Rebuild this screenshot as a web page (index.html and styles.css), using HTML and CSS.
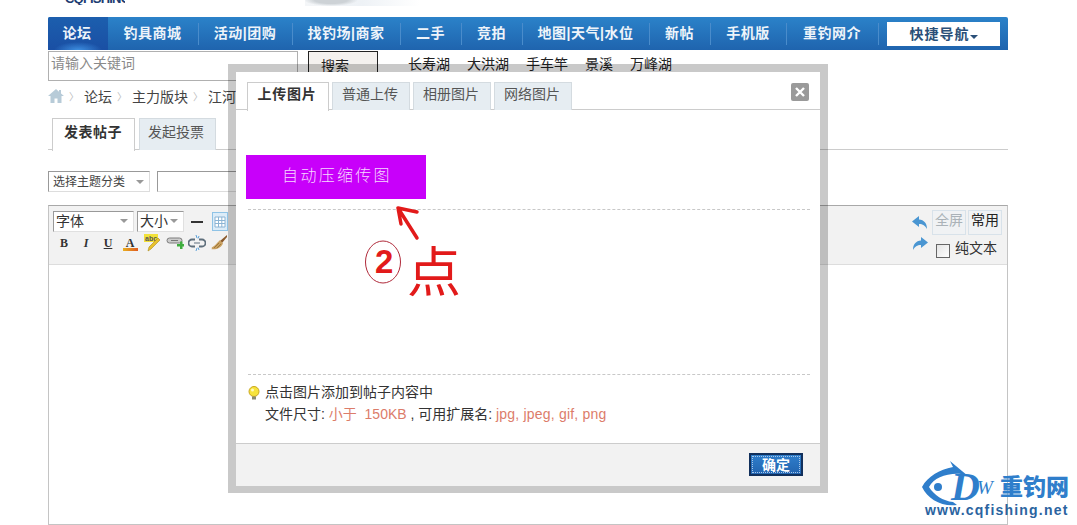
FILE: index.html
```html
<!DOCTYPE html>
<html lang="zh-CN">
<head>
<meta charset="utf-8">
<title>发表帖子</title>
<link rel="stylesheet" href="styles.css">
</head>
<body>
<div class="page">
  <header class="topbar">
    <div class="logo-clip"><span>CQFISHING</span></div>
    <div class="banner-clip"></div>
  </header>
  <nav class="nav">
    <a class="nav-item active">论坛</a>
    <a class="nav-item">钓具商城</a>
    <a class="nav-item">活动|团购</a>
    <a class="nav-item">找钓场|商家</a>
    <a class="nav-item">二手</a>
    <a class="nav-item">竞拍</a>
    <a class="nav-item">地图|天气|水位</a>
    <a class="nav-item">新帖</a>
    <a class="nav-item">手机版</a>
    <a class="nav-item">重钓网介</a>
    <a class="nav-quick">快捷导航<i class="caret"></i></a>
  </nav>
  <div class="search-row">
    <div class="search-input">请输入关键词</div>
    <div class="search-btn">搜索</div>
    <div class="hot-links"><a>长寿湖</a><a>大洪湖</a><a>手车竿</a><a>景溪</a><a>万峰湖</a></div>
  </div>
  <div class="crumbs">
    <svg class="home" viewBox="0 0 16 14" width="16" height="14"><path d="M8 0 0 7h2.500v7h4V9.500h3V14h4V7H16L13 4.400V1h-2v1.700z" fill="#b7cbd8"/></svg>
    <span class="sep">〉</span><span>论坛</span><span class="sep">〉</span><span>主力版块</span><span class="sep">〉</span><span>江河</span>
  </div>
  <div class="post-tabs">
    <div class="post-tab on">发表帖子</div>
    <div class="post-tab">发起投票</div>
  </div>
  <div class="form-row">
    <div class="type-select">选择主题分类<i class="mini-caret"></i></div>
    <div class="title-input"></div>
  </div>
  <section class="editor">
    <div class="toolbar">
      <div class="tool-left">
        <div class="tool-row">
          <div class="ed-select font">字体<i class="mini-caret"></i></div>
          <div class="ed-select size">大小<i class="mini-caret"></i></div>
          <i class="dash"></i>
          <svg class="table-ico" viewBox="0 0 16 19" width="16" height="19"><rect x=".5" y=".5" width="15" height="18" fill="#dcecf8" stroke="#8fc3e6"/><path d="M3 5h10v10H3z" fill="#fff" stroke="#8cb4d4"/><path d="M3 8.500h10M3 11.500h10M6.500 5v10M9.800 5v10" stroke="#8cb4d4"/></svg>
        </div>
        <div class="tool-row icons">
          <span class="ti b">B</span>
          <span class="ti it">I</span>
          <span class="ti u">U</span>
          <span class="ti color">A</span>
          <span class="ti"><svg viewBox="0 0 18 18" width="18" height="18"><rect x="0" y="0" width="14" height="8" fill="#f2e23a"/><text class="abc" x="1" y="7">abc</text><path d="M16 6 7 15l-3 2 1-4 9-9z" fill="#e8c22c" stroke="#a98a1c" stroke-width=".6"/></svg></span>
          <span class="ti"><svg viewBox="0 0 18 16" width="18" height="16"><rect x="1" y="3" width="15" height="5" rx="2.500" fill="#ccc" stroke="#7d7d7d"/><path d="M5 5.500h7" stroke="#777"/><path d="M11 9h3V6.500h2.500V9H19v2.500h-2.500V14H14v-2.500h-3z" fill="#3fae3f"/></svg></span>
          <span class="ti"><svg viewBox="0 0 18 16" width="18" height="16" fill="none"><path d="M7 4.500H4a3.500 3.500 0 0 0 0 7h3M11 4.500h3a3.500 3.500 0 0 1 0 7h-3" stroke="#5f6f7c" stroke-width="1.800"/><path d="M6 8h6" stroke="#5f6f7c"/><path d="M8 0l1 3M11 1 10 3.500M8 16l1-3M11 15l-1-2.500" stroke="#5aa0d8"/></svg></span>
          <span class="ti"><svg viewBox="0 0 18 16" width="18" height="16"><path d="M17 0 10 6l2 2 5-6z" fill="#8a5a2c"/><path d="M10 5 13 8.500C11 13 6 15 1 14c2-.8 1-1.500 0-1.500C4 12 7 8 10 5z" fill="#c9a060"/><path d="M4 13 9 8M7 13 11 9" stroke="#8a6a30" stroke-width=".7"/></svg></span>
        </div>
      </div>
      <div class="tool-right">
        <div class="tool-row">
          <svg class="arrow-ico" viewBox="0 0 16 13" width="16" height="13"><path d="M7 0 0 5.500 7 11V8c4 0 6 1.500 8 5 0-6-3-9-8-9.500z" fill="#4a96d2"/></svg>
          <span class="ed-btn dim">全屏</span>
          <span class="ed-btn">常用</span>
        </div>
        <div class="tool-row">
          <svg class="arrow-ico up" viewBox="0 0 16 13" width="16" height="13"><path d="M9 0l7 5.500L9 11V8C5 8 3 9.500 1 13c0-6 3-9 8-9.500z" fill="#4a96d2"/></svg>
          <i class="check"></i>
          <span class="plain">纯文本</span>
        </div>
      </div>
    </div>
    <div class="ed-body"></div>
  </section>
</div>

<aside class="dialog">
  <div class="dlg-head">
    <div class="dlg-tabs">
      <div class="dlg-tab on">上传图片</div>
      <div class="dlg-tab">普通上传</div>
      <div class="dlg-tab">相册图片</div>
      <div class="dlg-tab">网络图片</div>
    </div>
    <div class="dlg-close"><svg viewBox="0 0 10 10" width="10" height="10"><path d="M1 1l8 8M9 1l-8 8" stroke="#fff" stroke-width="2.400"/></svg></div>
  </div>
  <div class="upload-btn">自动压缩传图</div>
  <div class="dash-line first"></div>
  <div class="dash-line second"></div>
  <div class="tips">
    <svg class="bulb" viewBox="0 0 12 14" width="12" height="14"><circle cx="6" cy="5.500" r="5" fill="#f6e33c" stroke="#c9a61e"/><circle cx="4.500" cy="4" r="1.500" fill="#fff8c0"/><rect x="4" y="10.500" width="4" height="3" fill="#8a8a70"/></svg>
    <p>点击图片添加到帖子内容中</p>
    <p>文件尺寸: <em>小于 &nbsp;150KB</em> , 可用扩展名: <em class="ext">jpg, jpeg, gif, png</em></p>
  </div>
  <div class="dlg-foot"><button class="ok-btn"><span>确定</span></button></div>
</aside>

<svg class="annot" viewBox="0 0 115 110" width="115" height="110">
  <path d="M43 8 62 38M43 8 62 12M43 8 46 24" fill="none" stroke="#e21a1a" stroke-width="3.500" stroke-linecap="round"/>
  <ellipse cx="28" cy="62" rx="17.500" ry="21" fill="none" stroke="#b02a3a"/>
  <text class="annot-two" x="20" y="73">2</text>
  <text class="annot-dot" x="52" y="92">点</text>
</svg>

<div class="watermark">
  <svg class="fish" viewBox="0 0 80 48" width="80" height="48">
    <path d="M1 26C7 15 18 9 32 6L29 0 47 15 40 13C25 12 13 17 8 26 13 34 22 40 32 41L36 44C20 46 7 38 1 26z" fill="#2f7ecb"/>
    <circle cx="17" cy="26" r="4" fill="#2f7ecb"/>
    <text class="fish-d" x="30" y="39">D</text>
    <text class="fish-w" x="56" y="33">W</text>
  </svg>
  <div class="wm-name">重钓网</div>
  <div class="wm-url">www.cqfishing.net</div>
</div>
</body>
</html>
```
FILE: styles.css
```css
html, body {
  margin: 0;
  height: 525px;
  overflow: hidden;
  background: #fff;
  font-family: "Liberation Sans", "Noto Sans CJK SC", sans-serif;
  font-size: 14px;
  color: #333;
}
.page {
  width: 960px;
  margin-left: 48px;
  height: 525px;
  display: flex;
  flex-direction: column;
}
.topbar {
  height: 17px;
  flex: none;
  display: flex;
  align-items: flex-start;
}
.logo-clip {
  margin-left: 17px;
  width: 60px;
  height: 5px;
  overflow: hidden;
  display: flex;
  align-items: flex-end;
}
.logo-clip span {
  font: bold 13px/13px "Liberation Sans", sans-serif;
  color: #1d3d72;
  letter-spacing: -.8px;
  white-space: nowrap;
}
.banner-clip {
  margin-left: 180px;
  width: 115px;
  height: 6px;
  background: radial-gradient(ellipse 27px 6px at 26px 0, #cdd2d6 60%, transparent 100%), linear-gradient(90deg, #f4f6f8, #eef2f6 50%, #fff 100%);
}
.nav {
  height: 33px;
  flex: none;
  display: grid;
  grid-template-columns: 60px 91px 94px 108px 61px 61px 127px 61px 76px 92px 121px 8px;
  align-items: stretch;
  background: linear-gradient(#2b82c9, #1f64ae);
  border-radius: 2px 2px 0 0;
}
.nav-item {
  display: flex;
  align-items: center;
  justify-content: center;
  box-sizing: border-box;
  padding: 0 2px 4px 0;
  color: #eef4fa;
  font-weight: 700;
  font-size: 14px;
  letter-spacing: .5px;
  background: linear-gradient(#4a8ccb, #4a8ccb) no-repeat right center / 1px 22px;
}
.nav-item.active {
  background: radial-gradient(ellipse 24px 8px at 50% 100%, #3d8ee0, transparent), linear-gradient(#1c5fae, #1a4fa4);
  border-radius: 2px 0 0 0;
}
.nav-quick {
  grid-column: 11;
  margin: 5px 0 4px 8px;
  padding-bottom: 2px;
  background: #fff;
  color: #2a4f78;
  font-weight: 700;
  font-size: 14px;
  letter-spacing: 1px;
  display: flex;
  align-items: center;
  justify-content: center;
}
.caret {
  width: 0;
  height: 0;
  border: 4px solid transparent;
  border-top-color: #2a4f78;
  border-bottom: 0;
  margin-top: 7px;
}
.search-row {
  margin-top: 1px;
  height: 30px;
  flex: none;
  display: flex;
}
.search-input {
  width: 246px;
  height: 28px;
  border: 1px solid #b0b0b0;
  color: #8a8a8a;
  padding-left: 2px;
  line-height: 23px;
}
.search-btn {
  margin-left: 10px;
  width: 68px;
  height: 34px;
  border: 1px solid #222;
  background: #f4f1ee;
  color: #222;
  text-align: center;
  line-height: 28px;
  text-indent: -16px;
}
.hot-links {
  margin-left: 30px;
  display: flex;
  gap: 17px;
  color: #222;
  line-height: 26px;
}
.crumbs {
  margin-top: 4px;
  height: 22px;
  flex: none;
  display: flex;
  align-items: center;
  color: #444;
}
.sep {
  width: 20px;
  color: #bbb;
  font-size: 10px;
  text-align: center;
}
.post-tabs {
  margin-top: 11px;
  height: 31px;
  flex: none;
  display: flex;
  gap: 4px;
  padding-left: 4px;
  border-bottom: 1px solid #ccc;
}
.post-tab {
  width: 75px;
  height: 31px;
  background: #e6edf2;
  border: 1px solid #d4dbe0;
  border-bottom: 0;
  text-align: center;
  line-height: 26px;
  text-indent: -3px;
  color: #555;
}
.post-tab.on {
  width: 81px;
  height: 32px;
  background: #fff;
  border-color: #ccc;
  font-weight: 700;
  color: #333;
  letter-spacing: .5px;
  text-indent: -1px;
}
.form-row {
  margin-top: 21px;
  height: 21px;
  flex: none;
  display: flex;
  gap: 7px;
}
.type-select {
  width: 96px;
  padding: 0 0 2px 4px;
  height: 17px;
  border: 1px solid #aaa;
  border-color: #999 #ddd #ddd #999;
  font-size: 12px;
  color: #444;
  display: flex;
  align-items: center;
  gap: 11px;
}
.mini-caret {
  width: 0;
  height: 0;
  border: 4px solid transparent;
  border-top: 4px solid #999;
  border-bottom: 0;
  flex: none;
  margin-top: 2px;
}
.title-input {
  width: 300px;
  height: 19px;
  border: 1px solid #aaa;
  border-color: #999 #ddd #ddd #999;
}
.editor {
  margin-top: 13px;
  flex: 1;
  display: flex;
  flex-direction: column;
  border: 1px solid #c4c4c4;
  border-top-color: #a8a8a8;
}
.toolbar {
  height: 59px;
  flex: none;
  background: #f2f2f2;
  border-bottom: 1px solid #ddd;
  display: flex;
  justify-content: space-between;
  padding: 4px 5px 0 4px;
  box-sizing: border-box;
}
.tool-row {
  display: flex;
  align-items: center;
  height: 23px;
}
.ed-select {
  height: 21px;
  box-sizing: border-box;
  background: #fff;
  border: 1px solid #999;
  border-color: #999 #e0e0e0 #e0e0e0 #999;
  color: #333;
  padding: 0 5px 3px 2px;
  display: flex;
  align-items: center;
  justify-content: space-between;
}
.ed-select.font { width: 81px; }
.ed-select.size { width: 47px; margin-left: 3px; }
.dash {
  width: 12px;
  height: 2px;
  background: #333;
  margin-left: 7px;
}
.table-ico {
  margin-left: 9px;
}
.tool-row.icons {
  margin-top: -1px;
  height: 22px;
}
.ti {
  width: 22px;
  height: 22px;
  display: flex;
  align-items: center;
  justify-content: center;
  font: bold 12px "Liberation Serif", serif;
  color: #333;
}
.ti svg { margin-left: 2px; }
.ti.it { font-style: italic; }
.ti.u { text-decoration: underline; }
.ti.color {
  background: linear-gradient(90deg, #e8b020, #e05a20) no-repeat center 16px / 15px 3px;
}
.abc {
  font: bold 7px "Liberation Sans", sans-serif;
  fill: #555;
}
.tool-right {
  margin-top: 1px;
}
.arrow-ico {
  margin-right: 4px;
}
.arrow-ico.up {
  margin-top: -4px;
}
.ed-btn {
  height: 23px;
  width: 32px;
  margin-right: 2px;
  border: 1px solid #d8e2ea;
  background: #f0f2f4;
  text-align: center;
  line-height: 19px;
  color: #222;
}
.ed-btn:last-child { margin-right: 0; }
.ed-btn.dim { color: #aab2b8; }
.check {
  width: 12px;
  height: 12px;
  border: 1px solid #666;
  background: linear-gradient(135deg, #e4e4e4, #fff);
  margin: 10px 0 0 4px;
}
.plain {
  margin: 2px 0 0 5px;
  color: #333;
}
.ed-body {
  flex: 1;
  background: #fff;
}

.dialog {
  position: absolute;
  left: 228px;
  top: 64px;
  width: 600px;
  height: 429px;
  box-sizing: border-box;
  border: 8px solid rgba(0, 0, 0, .21);
  border-bottom-width: 7px;
  background: #fff;
  background-clip: padding-box;
  display: flex;
  flex-direction: column;
}
.dlg-head {
  height: 38px;
  flex: none;
  box-sizing: border-box;
  border-bottom: 1px solid #ccc;
  padding: 10px 11px 0;
  display: flex;
  justify-content: space-between;
  align-items: flex-start;
}
.dlg-tabs {
  display: flex;
  gap: 3px;
}
.dlg-tab {
  height: 27px;
  width: 76px;
  background: #e6edf2;
  border: 1px solid #d4dbe0;
  border-bottom: 0;
  text-align: center;
  line-height: 23px;
  text-indent: -2px;
  color: #555;
}
.dlg-tab.on {
  width: 80px;
  height: 28px;
  background: #fff;
  border-color: #ccc;
  font-weight: 700;
  color: #333;
  letter-spacing: .8px;
}
.dlg-close {
  width: 18px;
  height: 18px;
  margin-top: 1px;
  background: #9a9a9a;
  border-radius: 2px;
  display: flex;
  align-items: center;
  justify-content: center;
}
.upload-btn {
  flex: none;
  margin: 45px 0 0 10px;
  width: 180px;
  height: 44px;
  background: #c800fa;
  color: #f6d8ff;
  font-size: 16px;
  font-weight: 300;
  letter-spacing: 2.300px;
  line-height: 42px;
  text-align: center;
  text-indent: 2px;
}
.dash-line {
  flex: none;
  margin: 0 10px 0 12px;
  border-top: 1px dashed #c8c8c8;
}
.dash-line.first { margin-top: 10px; }
.dash-line.second { margin-top: 164px; }
.tips {
  position: relative;
  margin-top: 7px;
  padding-left: 29px;
  color: #333;
  line-height: 21px;
}
.tips p {
  margin: 0;
  white-space: nowrap;
}
.tips p + p {
  margin-top: 1px;
}
.tips em {
  font-style: normal;
  color: #dc7c6a;
}
.tips .ext {
  letter-spacing: .2px;
}
.bulb {
  position: absolute;
  left: 12px;
  top: 4px;
}
.dlg-foot {
  margin-top: auto;
  height: 33px;
  flex: none;
  background: #f2f2f2;
  border-top: 1px solid #ccc;
  display: flex;
  justify-content: flex-end;
  align-items: flex-start;
  padding: 9px 17px 0 0;
}
.ok-btn {
  width: 54px;
  height: 23px;
  padding: 0;
  border: 2px solid #12305c;
  background: linear-gradient(#2f7ecb, #2264b0);
  color: #fff;
  font: 700 14px/1 "Noto Sans CJK SC", sans-serif;
}
.ok-btn span {
  display: block;
  margin: 1px;
  height: 15px;
  line-height: 14px;
  border: 1px dotted #a8c8ea;
}

.annot {
  position: absolute;
  left: 355px;
  top: 200px;
}
.annot-two {
  font: 900 33px "Liberation Sans", sans-serif;
  fill: #e21a1a;
}
.annot-dot {
  font: 400 54px "Noto Sans CJK SC", sans-serif;
  fill: #e21a1a;
}

.watermark {
  position: absolute;
  left: 921px;
  top: 461px;
  width: 150px;
  height: 58px;
}
.fish {
  position: absolute;
  left: 0;
  top: 0;
  overflow: visible;
}
.fish-d {
  font: italic 700 40px "Liberation Serif", serif;
  fill: #2f7ecb;
}
.fish-w {
  font: italic 400 19px "Liberation Serif", serif;
  fill: #2f7ecb;
}
.wm-name {
  position: absolute;
  left: 79px;
  top: 11px;
  font: 900 23px/26px "Noto Sans CJK SC", sans-serif;
  color: #2f7ecb;
  white-space: nowrap;
}
.wm-url {
  position: absolute;
  left: 4px;
  top: 41px;
  font: 700 14px/16px "Liberation Sans", sans-serif;
  color: #2b649f;
  letter-spacing: 1.200px;
  white-space: nowrap;
}
```
